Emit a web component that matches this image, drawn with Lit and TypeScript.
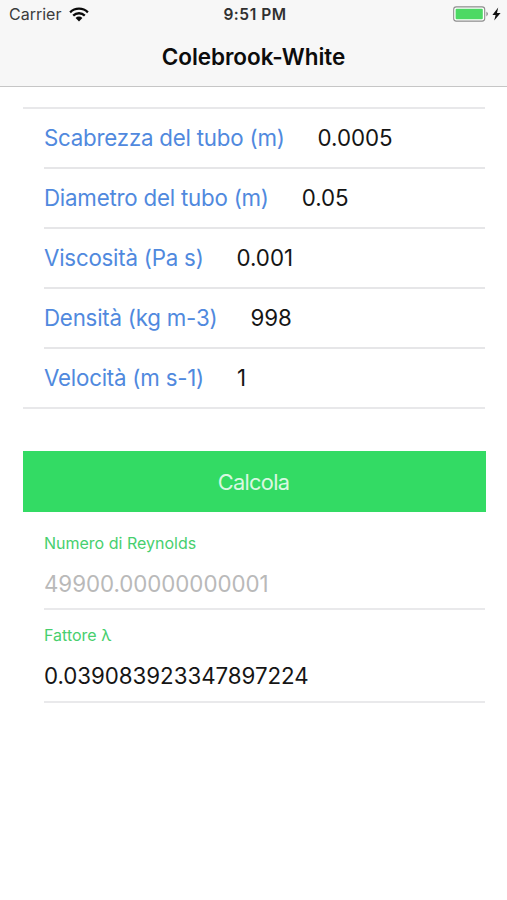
import { LitElement, html, css } from "lit";
import { customElement, state } from "lit/decorators.js";

interface Field { label: string; value: string; }

@customElement("status-bar")
class StatusBar extends LitElement {
  static styles = css`
    :host { display: grid; grid-template-columns: 1fr auto 1fr; align-items: center; height: 28px; padding: 0 6px 0 9px; }
    .left { display: flex; align-items: center; gap: 8px; font-size: 16px; color: #3c3c3c; }
    .time { font-size: 15.5px; font-weight: 600; letter-spacing: 0.55px; color: #303030; }
    .right { display: flex; justify-content: flex-end; }
    svg { display: block; }
  `;
  render() {
    return html`
      <div class="left"><span>Carrier</span>
        <svg width="20" height="15" viewBox="0 0 20 15">
          <g fill="none" stroke="#0a0a0a" stroke-width="2.3">
            <path d="M1.1 5.3A12.8 12.8 0 0 1 18.9 5.3"/>
            <path d="M4.2 8.6A8.3 8.3 0 0 1 15.8 8.6"/>
          </g>
          <path fill="#0a0a0a" d="M6.6 11A4.8 4.8 0 0 1 13.4 11L10 14.5Z"/>
        </svg>
      </div>
      <span class="time">9:51 PM</span>
      <div class="right">
        <svg width="48" height="16" viewBox="0 0 48 16">
          <rect x=".7" y=".9" width="31" height="14.2" rx="2.6" fill="#fff" stroke="#8d8d8d" stroke-width="1.1"/>
          <rect x="2.6" y="2.8" width="27.2" height="10.4" rx="1" fill="#4cd964"/>
          <path d="M33.4 5.6Q36.6 8 33.4 10.4Z" fill="#8d8d8d"/>
          <path d="M45.2 1.6L39.4 9H42.6L41.2 14.6L47.6 7H44Z" fill="#111"/>
        </svg>
      </div>`;
  }
}

@customElement("app-root")
class AppRoot extends LitElement {
  @state() fields: Field[] = [
    { label: "Scabrezza del tubo (m)", value: "0.0005" },
    { label: "Diametro del tubo (m)", value: "0.05" },
    { label: "Viscosità (Pa s)", value: "0.001" },
    { label: "Densità (kg m-3)", value: "998" },
    { label: "Velocità (m s-1)", value: "1" },
  ];
  static styles = css`
    :host { display: block; height: 900px; background: #fff; overflow: hidden; font-family: Inter, "Liberation Sans", sans-serif; color: #151515; }
    header { box-sizing: border-box; height: 87px; background: #f7f7f7; border-bottom: 1px solid #c6c6c6; }
    h1 { margin: 0; height: 58px; line-height: 58px; text-align: center; font-size: 22.5px; font-weight: 600; letter-spacing: -0.06px; color: #0c0c0c; }
    main { padding: 20px 22px 0 23px; }
    .list { border-top: 2px solid #e8e8ea; border-bottom: 2px solid #e8e8ea; }
    .row { box-sizing: border-box; height: 60px; margin-left: 21px; padding-bottom: 1px; display: flex; align-items: center; gap: 33px; font-size: 22.3px; letter-spacing: -0.04px; border-bottom: 2px solid #e6e6e8; }
    .row:last-child { border-bottom: 0; height: 58px; }
    .label { color: #5089de; letter-spacing: -0.22px; }
    .button { display: block; width: 463px; height: 61px; margin: 42px 0 0 -0.5px; padding: 0 1px 0 0; border: 0; background: #33db64; color: #d9f8e1; font: 21.8px Inter, sans-serif; letter-spacing: -0.7px; }
    .result { box-sizing: border-box; height: 92.5px; margin-left: 21px; padding-top: 15px; border-bottom: 2px solid #e9e9eb; }
    .first { height: 98px; padding-top: 21px; }
    .caption { font-size: 16px; line-height: 20px; color: #47cf6e; }
    .value { font-size: 22.3px; line-height: 30px; margin-top: 16px; letter-spacing: -0.04px; }
    .muted { color: #b9b9b9; }
  `;
  render() {
    return html`
      <header><status-bar></status-bar><h1>Colebrook-White</h1></header>
      <main>
        <div class="list">
          ${this.fields.map(f => html`<div class="row"><span class="label">${f.label}</span><span>${f.value}</span></div>`)}
        </div>
        <button class="button">Calcola</button>
        <div class="result first"><div class="caption">Numero di Reynolds</div><div class="value muted">49900.00000000001</div></div>
        <div class="result"><div class="caption">Fattore λ</div><div class="value">0.039083923347897224</div></div>
      </main>`;
  }
}
